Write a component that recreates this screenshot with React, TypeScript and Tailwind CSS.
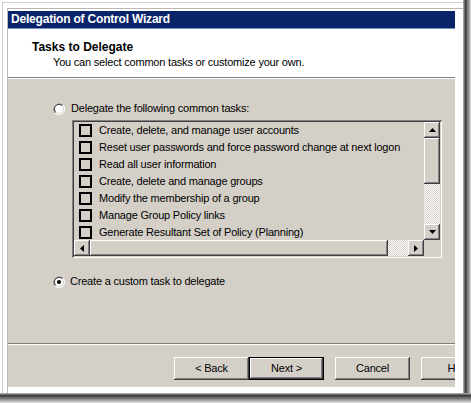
import React from "react";

const raised =
  "shadow-[inset_-1px_-1px_#404040,inset_1px_1px_#ffffff,inset_-2px_-2px_#808080,inset_2px_2px_#d4d0c8]";
const checker =
  "bg-[repeating-conic-gradient(#ffffff_0%_25%,#d4d0c8_0%_50%)] [background-size:2px_2px]";

function Arrow({ dir }: { dir: "up" | "down" | "left" | "right" }) {
  if (dir === "up")
    return (
      <svg width="7" height="4" viewBox="0 0 7 4">
        <path d="M3.5 0L7 4H0Z" fill="#000" />
      </svg>
    );
  if (dir === "down")
    return (
      <svg width="7" height="4" viewBox="0 0 7 4">
        <path d="M0 0H7L3.5 4Z" fill="#000" />
      </svg>
    );
  if (dir === "left")
    return (
      <svg width="4" height="7" viewBox="0 0 4 7">
        <path d="M4 0V7L0 3.5Z" fill="#000" />
      </svg>
    );
  return (
    <svg width="4" height="7" viewBox="0 0 4 7">
      <path d="M0 0L4 3.5L0 7Z" fill="#000" />
    </svg>
  );
}

function ScrollBtn({ dir }: { dir: "up" | "down" | "left" | "right" }) {
  return (
    <div className={`w-[16px] h-[16px] shrink-0 bg-[#d4d0c8] flex items-center justify-center ${raised}`}>
      <Arrow dir={dir} />
    </div>
  );
}

function Radio({ checked }: { checked?: boolean }) {
  return (
    <svg width="12" height="12" viewBox="0 0 12 12" className="shrink-0">
      <circle cx="6" cy="6" r="6" fill="#ffffff" />
      <path d="M1.76 10.24A6 6 0 0 1 10.24 1.76L6 6Z" fill="#808080" />
      <circle cx="6" cy="6" r="5" fill="#d4d0c8" />
      <path d="M2.46 9.54A5 5 0 0 1 9.54 2.46L6 6Z" fill="#404040" />
      <circle cx="6" cy="6" r="4" fill="#ffffff" />
      {checked && <circle cx="6" cy="6" r="2" fill="#000000" />}
    </svg>
  );
}

function Button({ label, isDefault }: { label: string; isDefault?: boolean }) {
  return (
    <div
      className={`w-[75px] h-[23px] shrink-0 bg-[#d4d0c8] flex items-center justify-center ${
        isDefault ? "border border-black" : ""
      } ${raised}`}
    >
      {label}
    </div>
  );
}

const items = [
  "Create, delete, and manage user accounts",
  "Reset user passwords and force password change at next logon",
  "Read all user information",
  "Create, delete and manage groups",
  "Modify the membership of a group",
  "Manage Group Policy links",
  "Generate Resultant Set of Policy (Planning)",
];

export default function App() {
  return (
    <div className="w-[471px] h-[403px] bg-white flex flex-col overflow-hidden font-['Liberation_Sans',Arial,sans-serif] text-[11px] tracking-[-0.2px] text-black leading-[13px]">
      <div className="flex h-[393px] shrink-0">
        <div className="w-[463px] h-full pl-[2px] pt-[2px] shrink-0">
          <div className="w-full h-full border-l border-t border-[#cfcfcf] pl-[4px] pt-[5px]">
            <div className="w-full h-full border-l border-t border-[#b8b8b8] pt-[2px]">
              <div className="w-[447px] flex flex-col">
                {/* Title bar */}
                <div className="h-[18px] bg-[#0a246a] border-b border-[#7d8fbf] flex items-center pl-[3px] text-white font-bold text-[12px] tracking-[-0.2px]">
                  Delegation of Control Wizard
                </div>
                {/* Header */}
                <div className="h-[48px] bg-white flex flex-col">
                  <div className="mt-[11px] ml-[24px] font-bold text-[12px] leading-[14px] tracking-[0px]">
                    Tasks to Delegate
                  </div>
                  <div className="mt-[2px] ml-[45px]">
                    You can select common tasks or customize your own.
                  </div>
                </div>
                <div className="h-[1px] bg-[#808080]" />
                <div className="h-[1px] bg-white" />
                {/* Body */}
                <div className="h-[308px] bg-[#d4d0c8] flex flex-col overflow-hidden">
                  <div className="mt-[23px] ml-[45px] h-[13px] flex items-center gap-[6px]">
                    <Radio />
                    <span>Delegate the following common tasks:</span>
                  </div>
                  <div className="mt-[5px] ml-[64px] w-[370px] h-[138px] p-[2px] bg-[#d4d0c8] shadow-[inset_1px_1px_#808080,inset_-1px_-1px_#ffffff,inset_2px_2px_#404040,inset_-2px_-2px_#d4d0c8]">
                    <div className="flex h-[118px]">
                      <div className="w-[350px] flex flex-col overflow-hidden">
                        {items.map((t) => (
                          <div key={t} className="h-[17px] shrink-0 flex items-center pl-[5px] gap-[7px] whitespace-nowrap">
                            <div className="w-[13px] h-[13px] shrink-0 border-2 border-black" />
                            <span>{t}</span>
                          </div>
                        ))}
                      </div>
                      <div className="w-[16px] flex flex-col">
                        <ScrollBtn dir="up" />
                        <div className={`h-[46px] shrink-0 bg-[#d4d0c8] ${raised}`} />
                        <div className={`flex-1 ${checker}`} />
                        <ScrollBtn dir="down" />
                      </div>
                    </div>
                    <div className="flex h-[16px]">
                      <ScrollBtn dir="left" />
                      <div className={`w-[298px] shrink-0 bg-[#d4d0c8] ${raised}`} />
                      <div className={`flex-1 ${checker}`} />
                      <ScrollBtn dir="right" />
                      <div className="w-[16px] h-[16px] bg-[#d4d0c8]" />
                    </div>
                  </div>
                  <div className="mt-[17px] ml-[45px] h-[13px] flex items-center gap-[5px]">
                    <Radio checked />
                    <span>Create a custom task to delegate</span>
                  </div>
                  <div className="mt-[55px] h-[1px] bg-[#808080]" />
                  <div className="h-[1px] bg-white" />
                  <div className="mt-[12px] pl-[166px] flex">
                    <Button label="< Back" />
                    <Button label="Next >" isDefault />
                    <div className="ml-[11px]">
                      <Button label="Cancel" />
                    </div>
                    <div className="ml-[11px]">
                      <Button label="Help" />
                    </div>
                  </div>
                </div>
              </div>
            </div>
          </div>
        </div>
        <div className="w-[8px] h-full bg-[linear-gradient(to_right,#bdbdbd,#3c3c3c_30%,#6e6e6e_55%,#a8a8a8_80%,#e6e6e6)]" />
      </div>
      <div className="h-[10px] shrink-0 bg-[linear-gradient(to_bottom,#bdbdbd,#3c3c3c_25%,#6e6e6e_50%,#a8a8a8_75%,#e6e6e6)]" />
    </div>
  );
}
